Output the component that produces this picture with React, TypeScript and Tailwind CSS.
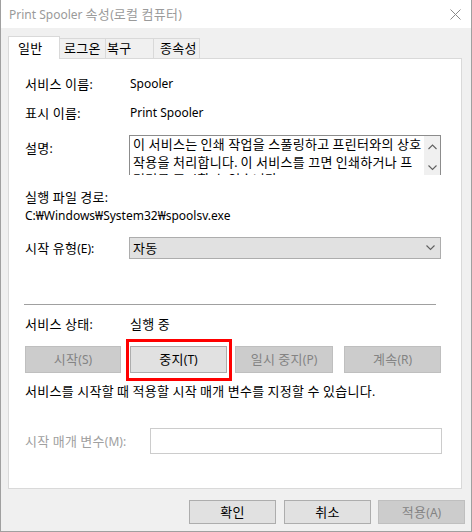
import React from "react";

function K({ t }: { t: string }) {
  const parts = t.split(/([\uAC00-\uD7A3]+)/);
  return (
    <>
      {parts.map((p, i) =>
        /[\uAC00-\uD7A3]/.test(p) ? (
          <span key={i} className="text-[13px] tracking-[0.3px]">
            {p}
          </span>
        ) : (
          <React.Fragment key={i}>{p}</React.Fragment>
        )
      )}
    </>
  );
}

function Chevron({ dir, color = "#606060" }: { dir: "up" | "down"; color?: string }) {
  return (
    <svg width="9" height="6" viewBox="0 0 9 6" className="block">
      {dir === "down" ? (
        <polyline points="0.5,0.5 4.5,4.5 8.5,0.5" fill="none" stroke={color} strokeWidth="1.1" />
      ) : (
        <polyline points="0.5,5 4.5,1 8.5,5" fill="none" stroke={color} strokeWidth="1.1" />
      )}
    </svg>
  );
}

function Btn({
  label,
  w,
  h,
  disabled,
  className = "",
}: {
  label: string;
  w: string;
  h: string;
  disabled?: boolean;
  className?: string;
}) {
  return (
    <div
      className={
        (disabled
          ? "bg-[#cccccc] border-[#bfbfbf] text-[#838383] "
          : "bg-[#e1e1e1] border-[#adadad] text-black ") +
        "border flex items-center justify-center shrink-0 whitespace-nowrap " +
        w +
        " " +
        h +
        " " +
        className
      }
    >
      <span>
        <K t={label} />
      </span>
    </div>
  );
}

export default function App() {
  return (
    <div className="w-[472px] h-[532px] bg-[#f0f0f0] border-l border-r border-b border-[#a0a0a0] flex flex-col text-[12px] leading-[16px] text-black [font-family:'Noto_Sans','Noto_Sans_CJK_KR',sans-serif] overflow-hidden">
      {/* Title bar */}
      <div className="h-[28px] bg-white flex items-center justify-between pl-[8px] pr-[10px] shrink-0">
        <span className="text-[#9a9a9a] whitespace-nowrap">
          <K t="Print Spooler 속성(로컬 컴퓨터)" />
        </span>
        <svg width="11" height="11" viewBox="0 0 11 11" className="block">
          <line x1="0.5" y1="0.5" x2="10.5" y2="10.5" stroke="#8a8a8a" strokeWidth="1" />
          <line x1="10.5" y1="0.5" x2="0.5" y2="10.5" stroke="#8a8a8a" strokeWidth="1" />
        </svg>
      </div>

      {/* Body */}
      <div className="px-[7px] pt-[8px] flex flex-col">
        {/* Tabs */}
        <div className="flex items-end h-[22px] relative z-10">
          <div className="w-[52px] h-[23px] -mb-px bg-white border-l border-t border-r border-[#d9d9d9] pl-[9px] flex items-center">
            <span><K t="일반" /></span>
          </div>
          <div className="w-[46px] h-[20px] border-t border-r border-[#d9d9d9] pl-[4px] flex items-center">
            <span><K t="로그온" /></span>
          </div>
          <div className="w-[48px] h-[20px] border-t border-r border-[#d9d9d9] pl-[1px] flex items-center">
            <span><K t="복구" /></span>
          </div>
          <div className="w-[46px] h-[20px] border-t border-r border-[#d9d9d9] pl-[6px] flex items-center">
            <span><K t="종속성" /></span>
          </div>
        </div>

        {/* Panel */}
        <div className="w-[454px] h-[431px] bg-white border border-[#d9d9d9] flex flex-col pl-[16px]">
          <div className="mt-[17px] h-[16px] flex items-center">
            <div className="w-[105px]"><K t="서비스 이름:" /></div>
            <div>Spooler</div>
          </div>
          <div className="mt-[13px] h-[16px] flex items-center">
            <div className="w-[105px]"><K t="표시 이름:" /></div>
            <div>Print Spooler</div>
          </div>
          <div className="mt-[14px] h-[40px] flex">
            <div className="w-[104px] pt-[5px]"><K t="설명:" /></div>
            <div className="w-[312px] h-[40px] border-t border-l border-r border-[#8c8c8c] flex overflow-hidden">
              <div className="flex-1 pl-[3px] leading-[16.5px] whitespace-nowrap overflow-hidden">
                <div><K t="이 서비스는 인쇄 작업을 스풀링하고 프린터와의 상호" /></div>
                <div><K t="작용을 처리합니다. 이 서비스를 끄면 인쇄하거나 프" /></div>
                <div><K t="린터를 표시할 수 없습니다." /></div>
              </div>
              <div className="w-[16px] shrink-0 bg-[#f0f0f0] flex flex-col items-center justify-between pt-[8px] pb-[4px]">
                <Chevron dir="up" />
                <Chevron dir="down" />
              </div>
            </div>
          </div>
          <div className="mt-[14px] h-[16px] flex items-center">
            <span><K t="실행 파일 경로:" /></span>
          </div>
          <div className="mt-[3px] h-[16px] flex items-center">C:₩Windows₩System32₩spoolsv.exe</div>
          <div className="mt-[13px] h-[22px] flex items-center">
            <div className="w-[104px]"><K t="시작 유형(E):" /></div>
            <div className="w-[312px] h-[22px] bg-[#e1e1e1] border border-[#adadad] flex items-center justify-between pl-[3px] pr-[5px]">
              <span><K t="자동" /></span>
              <Chevron dir="down" />
            </div>
          </div>
          <div className="mt-[45px] -ml-px w-[412px] h-px bg-[#a0a0a0]" />
          <div className="mt-[11px] h-[16px] flex items-center">
            <div className="w-[105px]"><K t="서비스 상태:" /></div>
            <div><K t="실행 중" /></div>
          </div>
          <div className="mt-[14px] flex">
            <Btn label="시작(S)" w="w-[96px]" h="h-[27px]" disabled />
            <div className="relative ml-[9px]">
              <Btn label="중지(T)" w="w-[97px]" h="h-[27px]" />
              <div className="absolute left-[-4px] top-[-7px] w-[106px] h-[42px] border-[3px] border-[#ff0000] pointer-events-none" />
            </div>
            <Btn label="일시 중지(P)" w="w-[98px]" h="h-[27px]" disabled className="ml-[8px]" />
            <Btn label="계속(R)" w="w-[97px]" h="h-[27px]" disabled className="ml-[11px]" />
          </div>
          <div className="mt-[10px] h-[16px] flex items-center whitespace-nowrap">
            <span><K t="서비스를 시작할 때 적용할 시작 매개 변수를 지정할 수 있습니다." /></span>
          </div>
          <div className="mt-[29px] h-[26px] flex items-center">
            <div className="w-[125px] text-[#a0a0a0] whitespace-nowrap"><K t="시작 매개 변수(M):" /></div>
            <div className="w-[292px] h-[26px] bg-white border border-[#cccccc]" />
          </div>
        </div>

        {/* Bottom buttons */}
        <div className="mt-[11px] flex pl-[181px]">
          <Btn label="확인" w="w-[87px]" h="h-[24px]" />
          <Btn label="취소" w="w-[87px]" h="h-[24px]" className="ml-[8px]" />
          <Btn label="적용(A)" w="w-[87px]" h="h-[24px]" disabled className="ml-[7px]" />
        </div>
      </div>
    </div>
  );
}
